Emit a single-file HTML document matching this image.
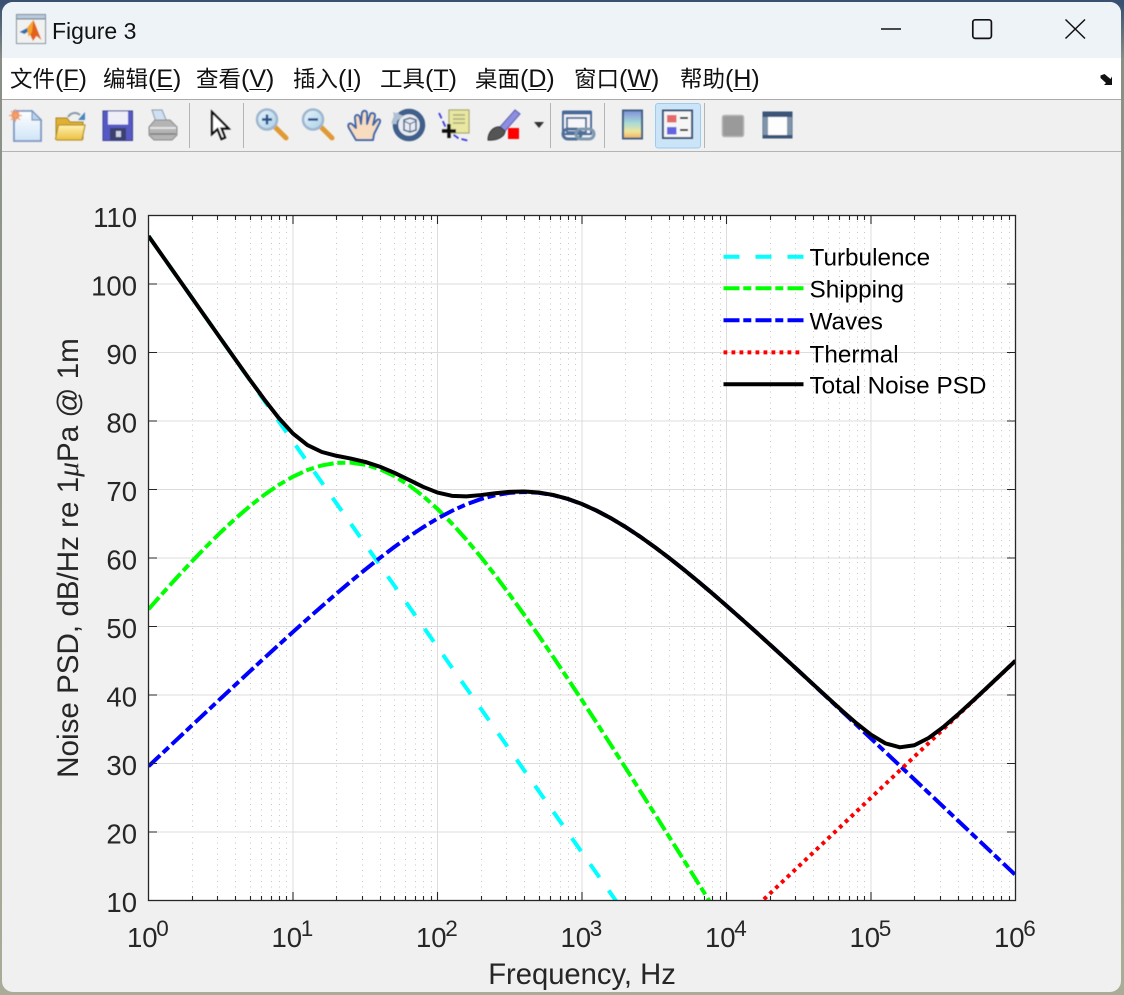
<!DOCTYPE html>
<html lang="zh"><head><meta charset="utf-8"><title>Figure 3</title>
<style>
html,body{margin:0;padding:0;width:1124px;height:995px;overflow:hidden;background:#a9ad97}
#bg{position:absolute;left:0;top:0;width:1124px;height:995px;background:linear-gradient(#3a5070 0,#3a5070 4px,#8a8f86 60px,#a9ad97 100%)}
#win{position:absolute;left:2px;top:2px;width:1119px;height:990px;background:#f0f0f0;border-radius:11px;overflow:hidden}
#title{position:absolute;left:0;top:0;width:1119px;height:56px;background:#eef3f8}
#title span{position:absolute;left:50px;top:16px;font:23px/26px "Liberation Sans",sans-serif;color:#111}
#menu{position:absolute;left:0;top:56px;width:1119px;height:41px;background:#fff;border-bottom:1.5px solid #aaa;box-sizing:content-box}
#menu span{position:absolute;top:6px;font:22.5px/30px "Liberation Sans","Noto Sans CJK SC",sans-serif;color:#111;white-space:nowrap}
#menu i{font-style:normal;font-size:25px}
#menu u{text-underline-offset:2px;text-decoration-thickness:1px}
#tb{position:absolute;left:0;top:98px;width:1119px;height:51px;background:#f0f0f0;border-bottom:1.5px solid #b4b4b4}
svg{position:absolute;left:0;top:0}
.t{font-family:"Liberation Sans",sans-serif;fill:#262626}
</style></head><body>
<div id="bg"></div>
<div id="win">
<div id="title"><span>Figure 3</span></div>
<div id="menu">
<span style="left:8px">文件<i>(<u>F</u>)</i></span>
<span style="left:101px">编辑<i>(<u>E</u>)</i></span>
<span style="left:194px">查看<i>(<u>V</u>)</i></span>
<span style="left:291px">插入<i>(<u>I</u>)</i></span>
<span style="left:378px">工具<i>(<u>T</u>)</i></span>
<span style="left:473px">桌面<i>(<u>D</u>)</i></span>
<span style="left:572px">窗口<i>(<u>W</u>)</i></span>
<span style="left:678px">帮助<i>(<u>H</u>)</i></span>
</div>
<div id="tb"></div>
</div>
<svg width="1124" height="995" viewBox="0 0 1124 995" xmlns="http://www.w3.org/2000/svg">
<defs>
<linearGradient id="gDoc" x1="0" y1="0" x2="0" y2="1"><stop offset="0" stop-color="#fff"/><stop offset="1" stop-color="#cfe4f7"/></linearGradient>
<linearGradient id="gFold" x1="0" y1="0" x2="0" y2="1"><stop offset="0" stop-color="#fff2b0"/><stop offset="1" stop-color="#ecc040"/></linearGradient>
<linearGradient id="gBar" x1="0" y1="0" x2="0" y2="1"><stop offset="0" stop-color="#7f8fd8"/><stop offset=".45" stop-color="#a8dcd8"/><stop offset=".75" stop-color="#f0e49a"/><stop offset="1" stop-color="#f0b060"/></linearGradient>
<linearGradient id="gLens" x1="0" y1="0" x2="1" y2="1"><stop offset="0" stop-color="#e8f4fb"/><stop offset="1" stop-color="#a9d0e6"/></linearGradient>
<clipPath id="ax"><rect x="148.5" y="215.5" width="867" height="685"/></clipPath>
<filter id="soft" x="-5%" y="-5%" width="110%" height="110%"><feGaussianBlur stdDeviation=".6"/></filter>
</defs>

<!-- window controls -->
<path d="M881 29H901" stroke="#111" stroke-width="1.6" fill="none"/>
<rect x="972.8" y="19.8" width="18.6" height="18.6" rx="2.5" fill="none" stroke="#111" stroke-width="1.7"/>
<path d="M1065.5 19.5L1085 38.5M1085 19.5L1065.5 38.5" stroke="#111" stroke-width="1.5" fill="none"/>
<!-- menu overflow arrow -->
<path d="M1100.5 75.5l4-1.500 6 5 1.500-2.500v8.500h-8l2-2-5.500-5z" fill="#111"/>

<g filter="url(#soft)">
<!-- matlab icon -->
<rect x="16.500" y="14.500" width="29" height="29" fill="#f1f1ef" stroke="#7f8f9c"/>
<rect x="17" y="15" width="28" height="4" fill="#b8cadb"/>
<path d="M17 19H45" stroke="#4f6478" stroke-width="1"/>
<path d="M19.500 32l7.500-4 2 3-4.500 3z" fill="#2f6fb0"/>
<path d="M27 28l6.500-8 8 20-5-4-3.500 5z" fill="#e2621a"/>
<path d="M27 28l6.500-8-1.500 12-3.500 5z" fill="#f5a52a"/>

<!-- new doc -->
<path d="M14 111H32L41 120V141H14Z" fill="url(#gDoc)" stroke="#7d97c2" stroke-width="1.800"/>
<path d="M32 111V120H41Z" fill="#bcd2ea" stroke="#7d97c2" stroke-width="1.200"/>
<circle cx="15.500" cy="115.500" r="4" fill="#f08a40"/><path d="M15.500 109v13M9 115.500h13M11 111l9 9M20 111l-9 9" stroke="#f2a070" stroke-width="1.200"/>
<!-- open -->
<path d="M56 118V139H83V122H70L67 118Z" fill="#e0b030" stroke="#a8842a" stroke-width="1"/>
<path d="M55.500 139L58.500 125H85L82 140H57Z" fill="url(#gFold)" stroke="#b8922c" stroke-width="1.200"/>
<path d="M68 117C71 112 77 112 80 115" fill="none" stroke="#8a9aa8" stroke-width="2"/>
<path d="M85 112V120H78Z" fill="#4a86c0"/>
<!-- save -->
<rect x="103" y="111" width="29.500" height="29.500" fill="#5658c4" stroke="#3a4590" stroke-width="1"/>
<rect x="108" y="111.500" width="20" height="13" fill="#eeeef8"/>
<rect x="110" y="128" width="16" height="12" fill="#3a4070"/>
<rect x="116" y="131" width="5" height="6" fill="#cfd2e2"/>
<!-- print -->
<path d="M152 110H162L167 122H156Z" fill="#cfe0f2" stroke="#8b98a6"/>
<path d="M149 127L155 120H170L177 127V135L172 140H154L149 135Z" fill="#b4b4b4" stroke="#8a8a8a"/>
<path d="M150 128H176" stroke="#e4e4e4" stroke-width="2"/><path d="M150 134H176" stroke="#808080" stroke-width="1.500"/>
<!-- pointer -->
<path d="M212 112V134L217.500 129L221.500 139L225 137.500L221.500 128.500H228.500Z" fill="#fff" stroke="#111" stroke-width="2.200" stroke-linejoin="miter"/>
<!-- zoom in -->
<path d="M275 127L286 138" stroke="#e09a35" stroke-width="5" stroke-linecap="round"/>
<circle cx="267" cy="119.500" r="10" fill="url(#gLens)" stroke="#9fb6cf" stroke-width="2.500"/>
<path d="M262 119.500h10M267 114.500v10" stroke="#27508c" stroke-width="2.400"/>
<!-- zoom out -->
<path d="M321 127L332 138" stroke="#e09a35" stroke-width="5" stroke-linecap="round"/>
<circle cx="313" cy="119.500" r="10" fill="url(#gLens)" stroke="#9fb6cf" stroke-width="2.500"/>
<path d="M308 119.500h10" stroke="#27508c" stroke-width="2.400"/>
<!-- hand -->
<path d="M356 140L349 128C347 124 350 122 353 125L356 128L355 118C355 114 359 114 360 118L361 124L362 113C363 110 367 110 367 114V124L370 115C371 112 375 113 375 116L373 125L377 120C380 118 381 121 379 124L374 134L373 140Z" fill="#f8dcc0" stroke="#3e66a8" stroke-width="2" stroke-linejoin="round"/>
<!-- rotate -->
<circle cx="409" cy="125" r="13.500" fill="#e8ecf2" stroke="#3f5f8a" stroke-width="5.500"/>
<path d="M394 124A15 15 0 0 1 399 114" fill="none" stroke="#b0c0d4" stroke-width="5"/>
<path d="M393 112L404 116L395 122Z" fill="#b0c0d4"/>
<path d="M404 120L410 118L416 120V130L410 132L404 130Z" fill="none" stroke="#5a7090" stroke-width="1.600"/><path d="M404 121L410 124L416 121M410 124V132" stroke="#5a7090" stroke-width="1.200" fill="none"/>
<!-- data cursor -->
<path d="M439 113L447 130L458 138L469 141" fill="none" stroke="#3a3ae0" stroke-width="1.800" stroke-dasharray="6 3"/>
<rect x="449" y="110" width="20" height="23" fill="#e8e8a2" stroke="#a8a870" stroke-width="1.200"/>
<path d="M453 115h12M453 119h12M453 123h12" stroke="#a9a97c" stroke-width="1.600"/>
<path d="M449 124V138M442 131H456" stroke="#111" stroke-width="3.400"/>
<!-- brush -->
<path d="M500 127L515 110L520 114L505 131Z" fill="#8d8ee0" stroke="#5a5ab0" stroke-width="1"/>
<path d="M488 140C488 132 494 126 500 127L505 131C505 136 498 141 488 140Z" fill="#555" stroke="#333" stroke-width="1"/>
<rect x="508" y="128" width="11" height="11" fill="#f00"/>
<path d="M534 122H544L539 128Z" fill="#333"/>
<!-- link -->
<rect x="563" y="112" width="28" height="22" fill="#f2f2f4" stroke="#46689a" stroke-width="2"/>
<rect x="563" y="110.500" width="28" height="4" fill="#46689a"/>
<rect x="567" y="118" width="19" height="14" fill="#f6f6f8" stroke="#46689a" stroke-width="1.800"/>
<rect x="563" y="129" width="18" height="10" rx="5" fill="none" stroke="#4d6f96" stroke-width="3"/>
<rect x="576" y="129" width="18" height="10" rx="5" fill="none" stroke="#7f97ae" stroke-width="3"/>
<!-- colorbar -->
<rect x="623" y="110.500" width="19" height="28" fill="url(#gBar)" stroke="#3f5f84" stroke-width="2"/>
</g>

<!-- legend btn -->
<rect x="655.500" y="103.500" width="45" height="44.500" rx="2.500" fill="#cce4f7" stroke="#9bcdf0"/>
<g filter="url(#soft)">
<rect x="663" y="110.500" width="29" height="27.500" fill="#f6f6f6" stroke="#3b5578" stroke-width="2"/>
<rect x="667" y="115" width="9.500" height="7.500" fill="#e46a6a"/>
<rect x="667" y="127" width="9.500" height="7.500" fill="#6464e2"/>
<path d="M680 118h8M680 130h8" stroke="#222" stroke-width="2"/>
<!-- grey box -->
<rect x="722.500" y="115.500" width="21" height="21" rx="2" fill="#9a9a9a" stroke="#b4b4b4" stroke-width="1.500"/>
<!-- window -->
<rect x="763" y="112" width="29" height="26" fill="#fdfdfd" stroke="#3b5578" stroke-width="1"/>
<path d="M763 112h29v5h-29zM763 135h29v3h-29z" fill="#3b5578"/>
<path d="M763 117h5v18h-5zM787 117h5v18h-5z" fill="#7f93aa"/>
</g>

<!-- separators -->
<path d="M189.500 103V148M243.500 103V148M550.500 103V148M604.500 103V148M704.500 103V148" stroke="#b4b4b4" stroke-width="1"/>

<!-- axes -->
<rect x="148.500" y="215.500" width="867" height="685" fill="#fff"/>
<g id="gridMinor" stroke="#c6c6c6" stroke-width="1" stroke-dasharray="1 4.500" fill="none"></g>
<g id="gridMajor" stroke="#dcdcdc" stroke-width="1" fill="none"></g>
<g clip-path="url(#ax)" fill="none">
<path id="cT" stroke="#00ffff" stroke-width="4" stroke-dasharray="16 16"/>
<path id="cS" stroke="#00ff00" stroke-width="4" stroke-dasharray="16 3.800 8 4.200"/>
<path id="cW" stroke="#0000ff" stroke-width="4" stroke-dasharray="16 3.800 8 4.200"/>
<path id="cH" stroke="#ff0000" stroke-width="4" stroke-dasharray="3.800 4.200"/>
<path id="cA" stroke="#000" stroke-width="4" stroke-linejoin="round"/>
</g>
<g id="ticks" stroke="#262626" stroke-width="1.100" fill="none"></g>
<rect x="148.500" y="215.500" width="867" height="685" fill="none" stroke="#262626" stroke-width="1.300"/>

<!-- y tick labels -->
<g class="t" font-size="27.500" text-anchor="end">
<text x="137" y="227">110</text>
<text x="137" y="295.500">100</text>
<text x="137" y="364">90</text>
<text x="137" y="432.500">80</text>
<text x="137" y="501">70</text>
<text x="137" y="569.500">60</text>
<text x="137" y="638">50</text>
<text x="137" y="706.500">40</text>
<text x="137" y="775">30</text>
<text x="137" y="843.500">20</text>
<text x="137" y="912">10</text>
</g>
<!-- x tick labels -->
<g class="t" font-size="27.500">
<text x="127" y="947">10</text><text x="156.200" y="936" font-size="22.500">0</text>
<text x="271.500" y="947">10</text><text x="300.700" y="936" font-size="22.500">1</text>
<text x="416" y="947">10</text><text x="445.200" y="936" font-size="22.500">2</text>
<text x="560.500" y="947">10</text><text x="589.700" y="936" font-size="22.500">3</text>
<text x="705" y="947">10</text><text x="734.200" y="936" font-size="22.500">4</text>
<text x="849.500" y="947">10</text><text x="878.700" y="936" font-size="22.500">5</text>
<text x="994" y="947">10</text><text x="1023.200" y="936" font-size="22.500">6</text>
</g>
<text class="t" x="582" y="984" font-size="29.200" text-anchor="middle">Frequency, Hz</text>
<text class="t" transform="translate(78,558) rotate(-90)" font-size="29.600" text-anchor="middle">Noise PSD, dB/Hz re 1<tspan font-family="Liberation Serif,serif" font-style="italic">μ</tspan>Pa @ 1m</text>

<!-- legend -->
<g fill="none" stroke-width="4">
<path d="M723.500 256.700H803.500" stroke="#00ffff" stroke-dasharray="16 16"/>
<path d="M723.500 288.300H803.500" stroke="#00ff00" stroke-dasharray="16 3.800 8 4.200"/>
<path d="M723.500 320.200H803.500" stroke="#0000ff" stroke-dasharray="16 3.800 8 4.200"/>
<path d="M723.500 352.400H803.500" stroke="#ff0000" stroke-dasharray="3.800 4.200"/>
<path d="M723.500 384.200H803.500" stroke="#000"/>
</g>
<g font-family="Liberation Sans,sans-serif" font-size="24.300" fill="#000">
<text x="809.500" y="265.500">Turbulence</text>
<text x="809.500" y="297.500">Shipping</text>
<text x="809.500" y="329.500">Waves</text>
<text x="809.500" y="362.500">Thermal</text>
<text x="809.500" y="393.500">Total Noise PSD</text>
</g>
</svg>
<script>
(function(){
var L=148.5,B=900.5,DX=144.5,DY=6.85,T=215.5,R=1015.5;
function X(d){return L+d*DX}function Y(v){return B-(v-10)*DY}
function lg(v){return Math.log(v)/Math.LN10}
function pw(v){return Math.pow(10,v/10)}
var c={cT:[],cS:[],cW:[],cH:[],cA:[]};
for(var i=0;i<=60;i++){
 var d=i/10,f=Math.pow(10,d-3);
 var nt=17-30*lg(f);
 var ns=40+26*lg(f)-60*lg(f+0.03);
 var nw=50+7.5*Math.sqrt(10)+20*lg(f)-40*lg(f+0.4);
 var nh=-15+20*lg(f);
 var na=10*lg(pw(nt)+pw(ns)+pw(nw)+pw(nh));
 var x=X(d);
 c.cT.push([x,Y(nt)]);c.cS.push([x,Y(ns)]);c.cW.push([x,Y(nw)]);c.cH.push([x,Y(nh)]);c.cA.push([x,Y(na)]);
}
/* keep only the part inside the axes (plus one neighbour), preserve dash phase */
function set(id){
 var arr=c[id],out=[],skip=0,started=false,n;
 for(n=0;n<arr.length;n++){
  var inside=arr[n][1]<=B,nextIn=n+1<arr.length&&arr[n+1][1]<=B,prevIn=n>0&&arr[n-1][1]<=B;
  if(inside||nextIn||prevIn){out.push(arr[n][0].toFixed(2)+' '+arr[n][1].toFixed(2));started=true;}
  else if(!started&&n+1<arr.length){skip+=Math.sqrt(Math.pow(arr[n+1][0]-arr[n][0],2)+Math.pow(arr[n+1][1]-arr[n][1],2));}
 }
 var el=document.getElementById(id);
 el.setAttribute('d','M'+out.join('L'));
 if(skip>0)el.setAttribute('stroke-dashoffset',skip.toFixed(2));
}
set('cT');set('cS');set('cW');set('cH');set('cA');
var mn='',mj='',tk='';
for(var dc=0;dc<6;dc++){
 for(var m=2;m<=9;m++){
  var xx=Math.round(X(dc+lg(m)))+.5;
  mn+='M'+xx+' '+T+'V'+B;
  tk+='M'+xx+' '+B+'v-4.500M'+xx+' '+T+'v4.500';
 }
 if(dc>0){var xm=X(dc);mj+='M'+xm+' '+T+'V'+B;tk+='M'+xm+' '+B+'v-8.500M'+xm+' '+T+'v8.500';}
}
for(var v=20;v<=100;v+=10){
 var yy=Y(v);mj+='M'+L+' '+yy+'H'+R;
 tk+='M'+L+' '+yy+'h8.500M'+R+' '+yy+'h-8.500';
}
document.getElementById('gridMinor').innerHTML='<path d="'+mn+'"/>';
document.getElementById('gridMajor').innerHTML='<path d="'+mj+'"/>';
document.getElementById('ticks').innerHTML='<path d="'+tk+'"/>';
})();
</script>
</body></html>
